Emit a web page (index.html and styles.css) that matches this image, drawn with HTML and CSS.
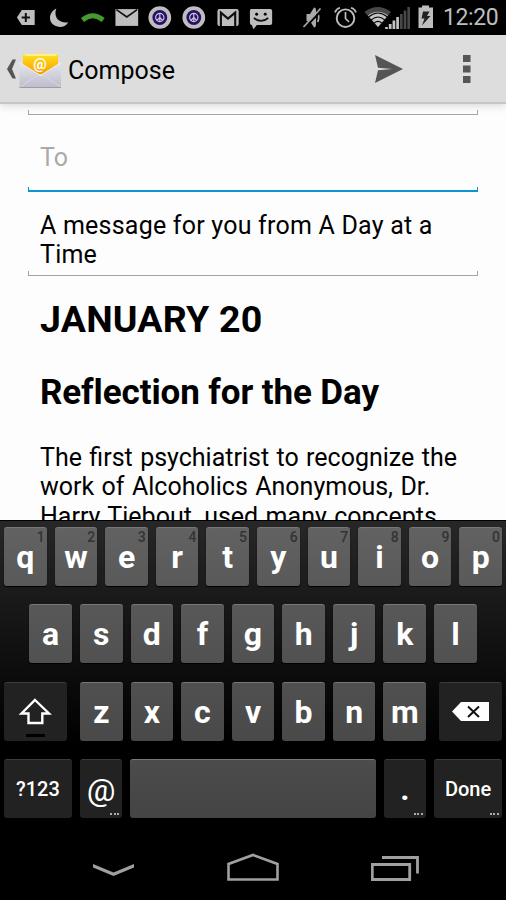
FILE: index.html
```html
<!DOCTYPE html>
<html lang="en">
  <head>
    <meta charset="UTF-8" />
    <title>Compose</title>
    <link rel="stylesheet" href="styles.css">
  </head>
  <body>
    <div class="status-bar">
      <div class="notifications">
        <svg viewBox="0 0 34 35">
          <path d="M8 17.500L13 10h13v15H13z" fill="#bebebe" />
          <path d="M17 13v9M12.800 17.500h8.400" stroke="#111" stroke-width="2" />
        </svg>
        <svg viewBox="0 0 34 35">
          <path d="M13.500 8.500C4 13 5 26.500 17 27C21 27 24 25 25.500 22.200C15 24 10.500 16 13.500 8.500z" fill="#bebebe" />
        </svg>
        <svg viewBox="0 0 34 35">
          <path d="M6.500 20Q17 11.500 27.500 20" fill="none" stroke="#46992f" stroke-width="5" />
        </svg>
        <svg viewBox="0 0 34 35">
          <path d="M5.500 9h23v17h-23z" fill="#bebebe" />
          <path d="M6.500 9.500L17 17L27.500 9.500" fill="none" stroke="#111" stroke-width="1.700" />
        </svg>
        <svg viewBox="0 0 34 35">
          <circle cx="17" cy="17.500" r="11.500" fill="#bebebe" />
          <circle cx="17" cy="17.500" r="7.500" fill="#281066" />
          <circle cx="17" cy="17.500" r="4.200" fill="none" stroke="#c8c4d8" stroke-width="1.200" />
          <path d="M17 13.300v8.400M17 17.500l-3 3M17 17.500l3 3" stroke="#c8c4d8" stroke-width="1.200" />
        </svg>
        <svg viewBox="0 0 34 35">
          <circle cx="17" cy="17.500" r="11.500" fill="#bebebe" />
          <circle cx="17" cy="17.500" r="7.500" fill="#281066" />
          <circle cx="17" cy="17.500" r="4.200" fill="none" stroke="#c8c4d8" stroke-width="1.200" />
          <path d="M17 13.300v8.400M17 17.500l-3 3M17 17.500l3 3" stroke="#c8c4d8" stroke-width="1.200" />
        </svg>
        <svg viewBox="0 0 34 35">
          <rect x="6.500" y="9" width="21.500" height="17" rx="2" fill="#bebebe" />
          <path d="M10 26V12.500L17.200 18.500L24.500 12.500V26" fill="none" stroke="#111" stroke-width="2.200" />
        </svg>
        <svg viewBox="0 0 34 35">
          <path d="M7.500 9h19q2 0 2 2v12q0 2-2 2H13l-3.500 4.500L8 25q-2 0-2-2V11q0-2 1.500-2z" fill="#bebebe" />
          <circle cx="12.800" cy="14.300" r="1.500" />
          <circle cx="21.500" cy="14.300" r="1.500" />
          <path d="M10 18Q17.200 24 24.500 18" fill="none" stroke="#111" stroke-width="1.700" />
        </svg>
      </div>
      <div class="system-icons">
        <svg width="34" viewBox="0 0 34 35">
          <path d="M10.500 14h3.500l4-6.500q2 0 2 3v14q0 3-2 3l-4-6.500h-3.500z" fill="#aaa" />
          <path d="M21.500 13q2.500 4.500 0 9" fill="none" stroke="#aaa" stroke-width="1.800" />
          <path d="M9 27.500L26 10" stroke="#000" stroke-width="2" />
          <path d="M7.500 27L24.500 8.500" stroke="#aaa" stroke-width="1.700" />
        </svg>
        <svg width="34" viewBox="0 0 34 35">
          <circle cx="15.500" cy="18.200" r="8.800" fill="none" stroke="#bebebe" stroke-width="1.900" />
          <path d="M15.500 12v6.500l3.500 3.500M5 12.500Q6 9 10 7.800M21 7.800Q25 9 26 12.500" fill="none" stroke="#bebebe" stroke-width="1.700" />
        </svg>
        <svg class="signal" width="48" viewBox="0 0 48 35">
          <path d="M.5 12Q13.700 2 27 12L14 27z" fill="#484848" />
          <path d="M4 15.500Q13.700 8 24 15.500L14 27z" fill="#c4c4c4" />
          <path d="M4.800 16.700Q14 9.300 23.200 16.700M7.300 19.800Q14 14.200 20.700 19.800M10.300 23Q14 19.800 17.700 23" fill="none" stroke="#000" stroke-width="1.100" />
          <path d="M21 29L46.500 6V29z" fill="#000" />
          <path d="M22.500 29v-2M26.200 29v-5M29.900 29v-8.500M33.600 29v-12" stroke="#c4c4c4" stroke-width="2.700" />
          <path d="M37.300 29V14M41 29V10.500M44.700 29V7" stroke="#484848" stroke-width="2.700" />
        </svg>
        <svg class="battery" width="16" viewBox="0 0 16 35">
          <path d="M.5 7.500H4V5.500h7v2h4V28H.5z" fill="#bebebe" />
          <path d="M5 11.500h6.500L9 16H12.500L4 25.500L6.500 18.500H3.500z" fill="#222" />
        </svg>
        <span class="clock">12:20</span>
      </div>
    </div>

    <div class="action-bar">
      <svg class="back" width="12" height="22" viewBox="0 0 12 22">
        <path d="M6.500 1.500H10L6 11L10 20.500H6.500L1 11z" fill="#555" />
      </svg>
      <svg class="mail-logo" width="44" height="44" viewBox="0 0 44 44">
        <defs>
          <linearGradient id="paper" x1="0" y1="0" x2="0" y2="1">
            <stop offset="0" stop-color="#ffe21f" />
            <stop offset="1" stop-color="#f99c00" />
          </linearGradient>
          <linearGradient id="front" x1="0" y1="0" x2="0" y2="1">
            <stop offset="0" stop-color="#e6e6ee" />
            <stop offset="1" stop-color="#bdbdcb" />
          </linearGradient>
        </defs>
        <path d="M1 17L21.500 1L42.500 17z" fill="#ecd9ce" />
        <path d="M4 7h35v20H4z" fill="url(#paper)" />
        <path d="M4 7h35L36 9H7z" fill="#fff08c" />
        <path d="M.5 15.500L21.500 28.500L42 15.500V40.500H.500z" fill="url(#front)" />
        <path d="M.5 15.500L21.500 28.500L42 15.500" fill="none" stroke="#f1f1f5" stroke-width="1" />
        <path d="M1 40L20 27.500M41.500 40L23 27.500" stroke="#d8d8e2" stroke-width="1" />
        <path d="M.5 40.500h41.500" stroke="#9c9ca8" />
        <text class="logo-at" x="21" y="21.500" text-anchor="middle">@</text>
      </svg>
      <h1 class="title">Compose</h1>
      <svg class="send" width="30" height="30" viewBox="0 0 30 30">
        <path d="M0 1L28 15L0 29L3 16.300L17 15L3 13.700z" fill="#555" />
      </svg>
      <svg class="overflow" width="8" height="30" viewBox="0 0 8 30">
        <path d="M0 1h7.500v7H0zM0 11.500h7.500v7H0zM0 22h7.500v7H0z" fill="#555" />
      </svg>
    </div>

    <div class="compose">
      <div class="field field-account"></div>
      <div class="field field-to">To</div>
      <div class="field field-subject">A message for you from A Day at a Time</div>
      <div class="message">
        <h2>JANUARY 20</h2>
        <h3>Reflection for the Day</h3>
        <p>The first psychiatrist to recognize the work of Alcoholics Anonymous, Dr. Harry Tiebout, used many concepts</p>
      </div>
    </div>

    <div class="keyboard">
      <div class="row">
        <div class="key">q<small>1</small></div>
        <div class="key">w<small>2</small></div>
        <div class="key">e<small>3</small></div>
        <div class="key">r<small>4</small></div>
        <div class="key">t<small>5</small></div>
        <div class="key">y<small>6</small></div>
        <div class="key">u<small>7</small></div>
        <div class="key">i<small>8</small></div>
        <div class="key">o<small>9</small></div>
        <div class="key">p<small>0</small></div>
      </div>
      <div class="row">
        <div class="key">a</div>
        <div class="key">s</div>
        <div class="key">d</div>
        <div class="key">f</div>
        <div class="key">g</div>
        <div class="key">h</div>
        <div class="key">j</div>
        <div class="key">k</div>
        <div class="key">l</div>
      </div>
      <div class="row row-third">
        <div class="key dark shift">
          <svg width="63" height="59" viewBox="0 0 63 59">
            <path d="M31 18L45 31.500H38.300V41H24.500V31.500H17.500z" fill="none" stroke="#fff" stroke-width="2.400" />
            <path d="M22 53.500h19" stroke="#000" stroke-width="3" />
          </svg>
        </div>
        <div class="key">z</div>
        <div class="key">x</div>
        <div class="key">c</div>
        <div class="key">v</div>
        <div class="key">b</div>
        <div class="key">n</div>
        <div class="key">m</div>
        <div class="key dark delete">
          <svg width="63" height="59" viewBox="0 0 63 59">
            <path d="M13 29.500L22 20H50V39H22z" fill="#fff" />
            <path d="M29 24.500L40 35M40 24.500L29 35" stroke="#111" stroke-width="2" />
          </svg>
        </div>
      </div>
      <div class="row row-fourth">
        <div class="key dark wide">?123</div>
        <div class="key dark at">@<i class="more"></i></div>
        <div class="key space"></div>
        <div class="key dark">.<i class="more"></i></div>
        <div class="key dark wide">Done<i class="more"></i></div>
      </div>
    </div>

    <div class="nav-bar">
      <svg width="42" height="30" viewBox="0 0 42 30">
        <path d="M0 13L0 16.500L20.500 25L41 16.500V13L20.500 21.500z" fill="#a0a0a0" />
      </svg>
      <svg width="52" height="30" viewBox="0 0 52 30">
        <path d="M1.500 28.500V13L26 4L50.500 13V28.500z" fill="none" stroke="#a0a0a0" stroke-width="2.600" />
      </svg>
      <svg width="48" height="30" viewBox="0 0 48 30">
        <path d="M1.300 13.500H38.700V28.500H1.300zM11 6.500H46.500V22.500" fill="none" stroke="#a0a0a0" stroke-width="2.800" />
      </svg>
    </div>
  </body>
</html>
```
FILE: styles.css
```css
* {
  margin: 0;
  padding: 0;
  box-sizing: border-box;
}

body {
  width: 506px;
  height: 900px;
  display: flex;
  flex-direction: column;
  overflow: hidden;
  background: #fdfdfd;
  color: #000;
  font-family: Roboto, sans-serif;
  font-size: 25px;
}

svg {
  display: block;
  flex-shrink: 0;
}

/* Status bar */
.status-bar {
  height: 35px;
  flex-shrink: 0;
  display: flex;
  justify-content: space-between;
  background: #000;
}

.notifications {
  display: flex;
  padding-left: 9px;
}

.notifications svg {
  width: 33.6px;
  height: 35px;
}

.system-icons {
  display: flex;
  padding-right: 8px;
}

.system-icons svg {
  height: 35px;
}

.battery {
  margin: 0 9px 0 6px;
}

.clock {
  width: 55px;
  line-height: 36px;
  font-size: 23px;
  letter-spacing: -0.4px;
  color: #bebebe;
  white-space: nowrap;
}

/* Action bar */
.action-bar {
  height: 69px;
  flex-shrink: 0;
  display: flex;
  align-items: center;
  padding: 0 35px 0 6px;
  background: #ddd;
  border-bottom: 2px solid #c6c6c6;
  box-shadow: 0 2px 8px rgba(0, 0, 0, 0.15);
}

.mail-logo {
  margin-left: 1px;
}

.logo-at {
  font-size: 15px;
  font-weight: 700;
  fill: #fff;
}

.title {
  margin-left: 5px;
  padding-top: 3px;
  flex: 1;
  font-size: 25px;
  font-weight: 400;
}

.overflow {
  margin-left: 58px;
}

/* Compose form */
.compose {
  height: 416px;
  flex-shrink: 0;
  padding: 0 28px;
  overflow: hidden;
}

.field {
  --line: #a4a4a4;
  --line-width: 1px;
  padding: 0 12px;
  line-height: 29.3px;
  background:
    linear-gradient(var(--line), var(--line)) left bottom / 1px 5px no-repeat,
    linear-gradient(var(--line), var(--line)) right bottom / 1px 5px no-repeat,
    linear-gradient(var(--line), var(--line)) left bottom / 100% var(--line-width) no-repeat;
}

.field-account {
  height: 11px;
}

.field-to {
  --line: #0c95ce;
  --line-width: 2px;
  height: 77px;
  padding-top: 28px;
  color: #aaa;
}

.field-subject {
  height: 84px;
  padding-top: 19px;
  letter-spacing: 0.22px;
}

.message {
  padding: 21px 12px 0;
}

.message h2 {
  font-size: 37.5px;
  line-height: 44px;
  letter-spacing: 0.2px;
}

.message h3 {
  margin-top: 31px;
  font-size: 35px;
  line-height: 41px;
  letter-spacing: -0.1px;
}

.message p {
  margin-top: 30px;
  width: 440px;
  line-height: 29.3px;
  word-spacing: 1.2px;
}

/* Keyboard */
.keyboard {
  height: 302px;
  flex-shrink: 0;
  display: flex;
  flex-direction: column;
  gap: 18.4px;
  padding: 6px 4px 0;
  border-top: 1px solid #000;
  background: linear-gradient(#272727, #0a0a0a 55%, #000 75%);
}

.row {
  display: flex;
  justify-content: center;
  gap: 8px;
}

.row-third {
  justify-content: space-between;
}

.key {
  position: relative;
  width: 42.6px;
  height: 59px;
  border-radius: 3px;
  border-top: 1px solid #777;
  background: linear-gradient(#626262, #595959);
  color: #fff;
  font-size: 32px;
  font-weight: 700;
  line-height: 58px;
  text-align: center;
  box-shadow: 0 1px 1px #000;
}

.row:nth-child(2) .key {
  background: linear-gradient(#585858, #515151);
}

.row-third .key {
  background: linear-gradient(#505050, #494949);
}

.row .key.dark {
  background: #222;
  border-top-color: #3c3c3c;
}

.key small {
  position: absolute;
  top: 1px;
  right: 2px;
  color: #333;
  font-size: 14px;
  font-weight: 500;
  line-height: 16px;
}

.row .shift {
  width: 63px;
  margin-right: 5px;
}

.row .delete {
  width: 63px;
  margin-left: 5px;
}

.shift svg,
.delete svg {
  margin-top: -1px;
}

.row .wide {
  width: 67.8px;
  font-size: 20px;
  font-weight: 500;
}

.row .at {
  font-weight: 400;
  line-height: 61px;
}

.row .space {
  flex: 1;
  background: linear-gradient(#4c4c4c, #444);
}

.more {
  position: absolute;
  right: 3px;
  bottom: 3px;
  width: 9px;
  height: 2px;
  background: repeating-linear-gradient(90deg, #aaa 0 2px, transparent 2px 3.5px);
}

/* Navigation bar */
.nav-bar {
  flex: 1;
  display: flex;
  justify-content: space-between;
  padding: 29px 87px 0 93px;
  background: #000;
}
```
